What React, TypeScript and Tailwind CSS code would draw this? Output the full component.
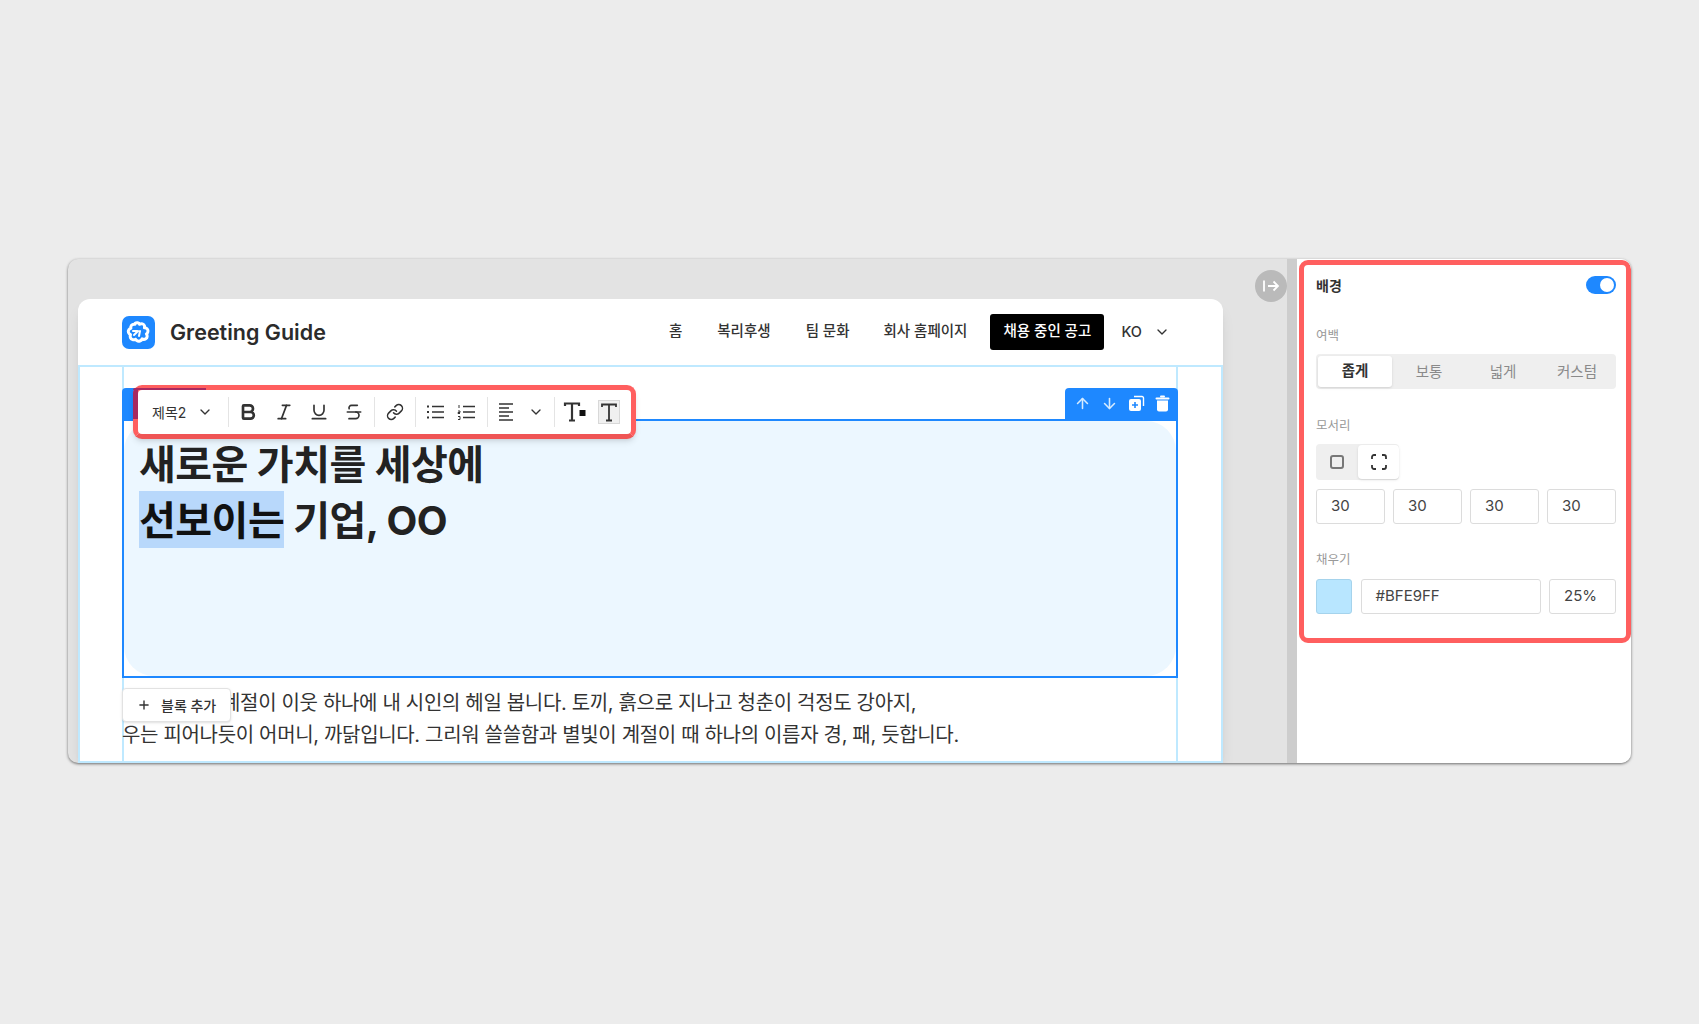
import { ArrowDown, ArrowUp, Bold, ChevronDown, Italic, Link, Plus, Strikethrough, Underline } from "lucide-react";

const Divider = () => <div className="w-px h-[30px] bg-[#e4e4e4] shrink-0" />;

const Logo = () => (
  <svg width="33" height="33" viewBox="0 0 33 33" className="shrink-0">
    <rect width="33" height="33" rx="7" fill="#1e88ff" />
    <path
      d="M13 7.5c1.6-1.4 3.8-.8 4.6.8 1.8-1.2 4.4-.5 4.9 1.6.2.8.1 1.3-.1 1.9 2.4-.2 4 1.8 3.5 4-.2 1-.8 1.7-1.5 2.2 1.2 1.4 1 3.6-.6 4.7-1.2.8-2.6.8-3.7.2-.8 2.1-3.4 3-5.3 1.7-.6-.4-1-.9-1.2-1.4-1.9 1.2-4.4.4-5.2-1.6-.4-1-.3-2 .1-2.9-2-.8-2.8-3.2-1.6-5 .5-.8 1.2-1.3 2-1.5-.6-2 .9-4 3.1-4 .3 0 .7 0 1 .1 0-.3.1-.6 0-.8z"
      fill="#1e88ff"
      stroke="#fff"
      strokeWidth="3"
      strokeLinejoin="round"
    />
    <path d="M12 19l4-4M17 20l1-5M11 15l4 0" stroke="#fff" strokeWidth="2" strokeLinecap="round" />
  </svg>
);

const BulletIcon = () => (
  <svg width="20" height="18" viewBox="0 0 20 18" fill="none" stroke="#333" strokeWidth="1.6">
    <path d="M6 3.5h12M6 9h12M6 14.5h12" />
    <path d="M1 3.5h2M1 9h2M1 14.5h2" strokeWidth="2" />
  </svg>
);

const NumberedIcon = () => (
  <svg width="20" height="18" viewBox="0 0 20 18" fill="none" stroke="#333" strokeWidth="1.6">
    <path d="M6 3.5h12M6 9h12M6 14.5h12" />
    <path d="M2 2v3M1 8h2v1.5H1v1h2M1 13.5h2v3H1" strokeWidth="1" />
  </svg>
);

const AlignIcon = () => (
  <svg width="16" height="20" viewBox="0 0 16 20" fill="none" stroke="#333" strokeWidth="1.5">
    <path d="M1 2h14M1 6h10M1 10h14M1 14h10M1 18h14" />
  </svg>
);

const SizeIcon = () => (
  <svg width="24" height="22" viewBox="0 0 24 22" fill="none" stroke="#333">
    <path d="M2 5V2.5h14V5M9 2.5V19M6 19.5h6" strokeWidth="2.2" />
    <rect x="16.5" y="9" width="6" height="6" fill="#111" stroke="none" />
  </svg>
);

const BoxedTIcon = () => (
  <div className="w-[22px] h-[24px] bg-[#f0f0f0] border border-[#d8d8d8] flex items-center justify-center">
    <svg width="18" height="20" viewBox="0 0 18 20" fill="none" stroke="#333">
      <path d="M2 5V2.5h14V5M9 2.5V18M6 18.5h6" strokeWidth="1.8" />
    </svg>
  </div>
);

const DuplicateIcon = () => (
  <svg width="17" height="17" viewBox="0 0 17 17">
    <path d="M6 1.5h8a1.5 1.5 0 0 1 1.5 1.5v8" fill="none" stroke="#fff" strokeWidth="1.4" />
    <rect x="1" y="4" width="12" height="12" rx="2" fill="#fff" />
    <path d="M7 7v6M4 10h6" stroke="#1e88ff" strokeWidth="1.6" />
  </svg>
);

const TrashIcon = () => (
  <svg width="15" height="17" viewBox="0 0 15 17" fill="#fff">
    <rect x="0.5" y="2.5" width="14" height="2" rx="1" />
    <rect x="5" y="0.5" width="5" height="2" rx="1" />
    <path d="M2 5.5h11v9a2 2 0 0 1-2 2H4a2 2 0 0 1-2-2z" />
  </svg>
);

const Toolbar = () => (
  <div className="absolute left-[9px] top-[-36px] w-[503px] h-[54px] bg-white border-[5px] border-[#ff5f5f] border-b-[#ef5555] rounded-[9px] flex items-center pl-[14px] text-[#333] shadow-md">
    {/* the highlight box sits over the blue tab, so its edge goes dark there */}
    <div className="absolute left-[-5px] top-[-2px] w-[5px] h-[31px] bg-[#a8295f] rounded-tl-[5px]" />
    <div className="absolute left-[-5px] top-[-2px] w-[73px] h-[2px] bg-[#a8295f] rounded-tl-[5px]" />
    <span className="text-[14px] w-[36px] whitespace-nowrap">제목2</span>
    <ChevronDown size={16} className="ml-[9px] mr-[15px]" />
    <Divider />
    <Bold size={20} strokeWidth={3.2} className="ml-[9px]" />
    <Italic size={20} className="ml-[16px]" />
    <Underline size={20} className="ml-[15px]" />
    <Strikethrough size={20} className="ml-[15px]" />
    <div className="ml-[10px]"><Divider /></div>
    <Link size={18} className="ml-[11px]" />
    <div className="ml-[11px]"><Divider /></div>
    <div className="ml-[10px]"><BulletIcon /></div>
    <div className="ml-[11px]"><NumberedIcon /></div>
    <div className="ml-[10px]"><Divider /></div>
    <div className="ml-[10px]"><AlignIcon /></div>
    <ChevronDown size={16} className="ml-[14px]" />
    <div className="ml-[10px]"><Divider /></div>
    <div className="ml-[8px]"><SizeIcon /></div>
    <div className="ml-[11px]"><BoxedTIcon /></div>
  </div>
);

const SelectedBlock = () => (
  <div className="relative h-[259px] border-2 border-[#1e88ff] -mx-[2px]">
    <div className="absolute left-[-2px] top-[-33px] w-[84px] h-[31px] bg-[#1e88ff] rounded-t-[4px]" />
    <div className="absolute right-[-2px] top-[-33px] w-[113px] h-[31px] bg-[#1e88ff] rounded-t-[4px] flex items-center justify-center gap-[10px] text-[#d6ebff]">
      <ArrowUp size={17} strokeWidth={2.2} />
      <ArrowDown size={17} strokeWidth={2.2} />
      <DuplicateIcon />
      <TrashIcon />
    </div>
    <div className="h-full bg-[#ecf7ff] rounded-[30px] pt-[16px] pl-[15px]">
      <h1 className="text-[40px] leading-[56px] font-bold text-[#222] tracking-[-0.5px]">
        새로운 가치를 세상에
        <br />
        <span className="bg-[#b8d8fb] text-[#111] pt-[5px] pb-[3px]">선보이는</span> 기업, OO
      </h1>
    </div>
    <Toolbar />
  </div>
);

const Nav = () => (
  <header className="h-[66px] flex items-center pl-[44px] text-[#333]">
    <Logo />
    <span className="ml-[15px] text-[21.5px] font-semibold text-[#2b2b2b]">Greeting Guide</span>
    <nav className="ml-auto flex items-center text-[14.5px] font-medium whitespace-nowrap pr-[53px]">
      <span className="pb-[3px]">홈</span>
      <span className="ml-[35px] pb-[3px]">복리후생</span>
      <span className="ml-[35px] pb-[3px]">팀 문화</span>
      <span className="ml-[34px] pb-[3px]">회사 홈페이지</span>
      <span className="ml-[23px] w-[114px] h-[36px] pb-[3px] rounded-[3px] bg-black text-white flex items-center justify-center">채용 중인 공고</span>
      <span className="ml-[17px] pb-[1px]">KO</span>
      <ChevronDown size={16} className="ml-[12px]" />
    </nav>
  </header>
);

const Field = ({ children, className }: { children: string; className: string }) => (
  <div className={`h-[35px] border border-[#dcdcdc] rounded-[3px] flex items-center text-[15px] text-[#444] ${className}`}>{children}</div>
);

const Label = ({ children }: { children: string }) => <div className="text-[12.5px] leading-[18px] text-[#999]">{children}</div>;

const SidePanel = () => (
  <aside className="relative w-[334px] bg-white pl-[19px] pr-[15px] text-[#333]">
    <div className="absolute left-[2px] top-[1px] w-[332px] h-[383px] border-[5px] border-[#ff5f5f] rounded-[9px]" />
    <div className="h-[55px] pt-[17px] flex items-start justify-between">
      <span className="text-[14px] leading-[20px] font-bold">배경</span>
      <div className="w-[30px] h-[18px] rounded-full bg-[#1e88ff] flex items-center justify-end pr-[2px]">
        <div className="w-[14px] h-[14px] rounded-full bg-white" />
      </div>
    </div>
    <div className="pt-[13px]">
      <Label>여백</Label>
    </div>
    <div className="mt-[9px] h-[35px] rounded-[4px] bg-[#efefef] p-[2px] flex items-center text-[14.5px] text-[#8a8a8a]">
      <div className="flex-1 h-full pb-[1px] rounded-[3px] bg-white shadow-sm flex items-center justify-center font-bold text-[#333]">좁게</div>
      <div className="flex-1 text-center">보통</div>
      <div className="flex-1 text-center">넓게</div>
      <div className="flex-1 text-center">커스텀</div>
    </div>
    <div className="mt-[28px]">
      <Label>모서리</Label>
    </div>
    <div className="mt-[9px] w-[83px] h-[36px] rounded-[4px] bg-[#efefef] flex items-center">
      <div className="w-[42px] flex justify-center">
        <div className="w-[14px] h-[14px] rounded-[3px] border-2 border-[#777]" />
      </div>
      <div className="w-[41px] h-[34px] rounded-[4px] bg-white shadow-sm flex items-center justify-center">
        <svg width="16" height="16" viewBox="0 0 16 16" fill="none" stroke="#333" strokeWidth="1.8">
          <path d="M1 5V3a2 2 0 0 1 2-2h2M11 1h2a2 2 0 0 1 2 2v2M15 11v2a2 2 0 0 1-2 2h-2M5 15H3a2 2 0 0 1-2-2v-2" />
        </svg>
      </div>
    </div>
    <div className="mt-[9px] flex justify-between">
      <Field className="w-[69px] pl-[14px]">30</Field>
      <Field className="w-[69px] pl-[14px]">30</Field>
      <Field className="w-[69px] pl-[14px]">30</Field>
      <Field className="w-[69px] pl-[14px]">30</Field>
    </div>
    <div className="mt-[27px]">
      <Label>채우기</Label>
    </div>
    <div className="mt-[10px] flex justify-between">
      <div className="w-[36px] h-[35px] rounded-[3px] bg-[#b8e6ff] border border-[#a5d3ec]" />
      <Field className="w-[180px] pl-[14px]">#BFE9FF</Field>
      <Field className="w-[67px] pl-[14px]">25%</Field>
    </div>
  </aside>
);

export default function App() {
  return (
    <div className="h-screen w-full bg-[#ececec] pt-[259px] pl-[68px] overflow-hidden font-['Inter','Noto_Sans_CJK_KR',sans-serif]">
      <div className="relative w-[1563px] h-[504px] rounded-[10px] overflow-hidden flex shadow-[0_1px_3px_rgba(0,0,0,0.55)] bg-[#e3e3e3]">
        <main className="w-[1219px] pt-[40px] pl-[10px] shrink-0">
          <div className="w-[1145px] h-[464px] bg-white rounded-t-[12px] shadow-lg overflow-hidden">
            <Nav />
            <div className="h-[398px] border-2 border-[#bfe9ff] pl-[42px] pr-[43px]">
              <div className="h-full border-x-2 border-[#bfe9ff] pt-[52px] relative">
                <SelectedBlock />
                <p className="-ml-[2px] mt-[9px] text-[20px] leading-[32px] text-[#333] whitespace-nowrap tracking-[-0.33px]">
                  <span className="inline-block w-[100px]" />계절이 이웃 하나에 내 시인의 헤일 봅니다. 토끼, 흙으로 지나고 청춘이 걱정도 강아지,
                  <br />
                  우는 피어나듯이 어머니, 까닭입니다. 그리워 쓸쓸함과 별빛이 계절이 때 하나의 이름자 경, 패, 듯합니다.
                </p>
                <div className="absolute left-[-2px] top-[321px] w-[109px] h-[34px] bg-white border border-[#e2e2e2] rounded-[4px] shadow-sm flex items-center pl-[14px] gap-[10px] text-[14px] font-medium text-[#333]">
                  <Plus size={14} strokeWidth={2.4} />
                  <span className="whitespace-nowrap">블록 추가</span>
                </div>
              </div>
            </div>
          </div>
        </main>
        <div className="w-[10px] bg-[#cdcdcd] shrink-0" />
        <SidePanel />
        <div className="absolute left-[1187px] top-[11px] w-[32px] h-[32px] rounded-full bg-[#bababa] flex items-center justify-center">
          <svg width="18" height="14" viewBox="0 0 18 14" fill="none" stroke="#fff" strokeWidth="1.8">
            <path d="M2 1.5v11M6 7h10M11.5 2.5L16 7l-4.5 4.5" />
          </svg>
        </div>
      </div>
    </div>
  );
}
